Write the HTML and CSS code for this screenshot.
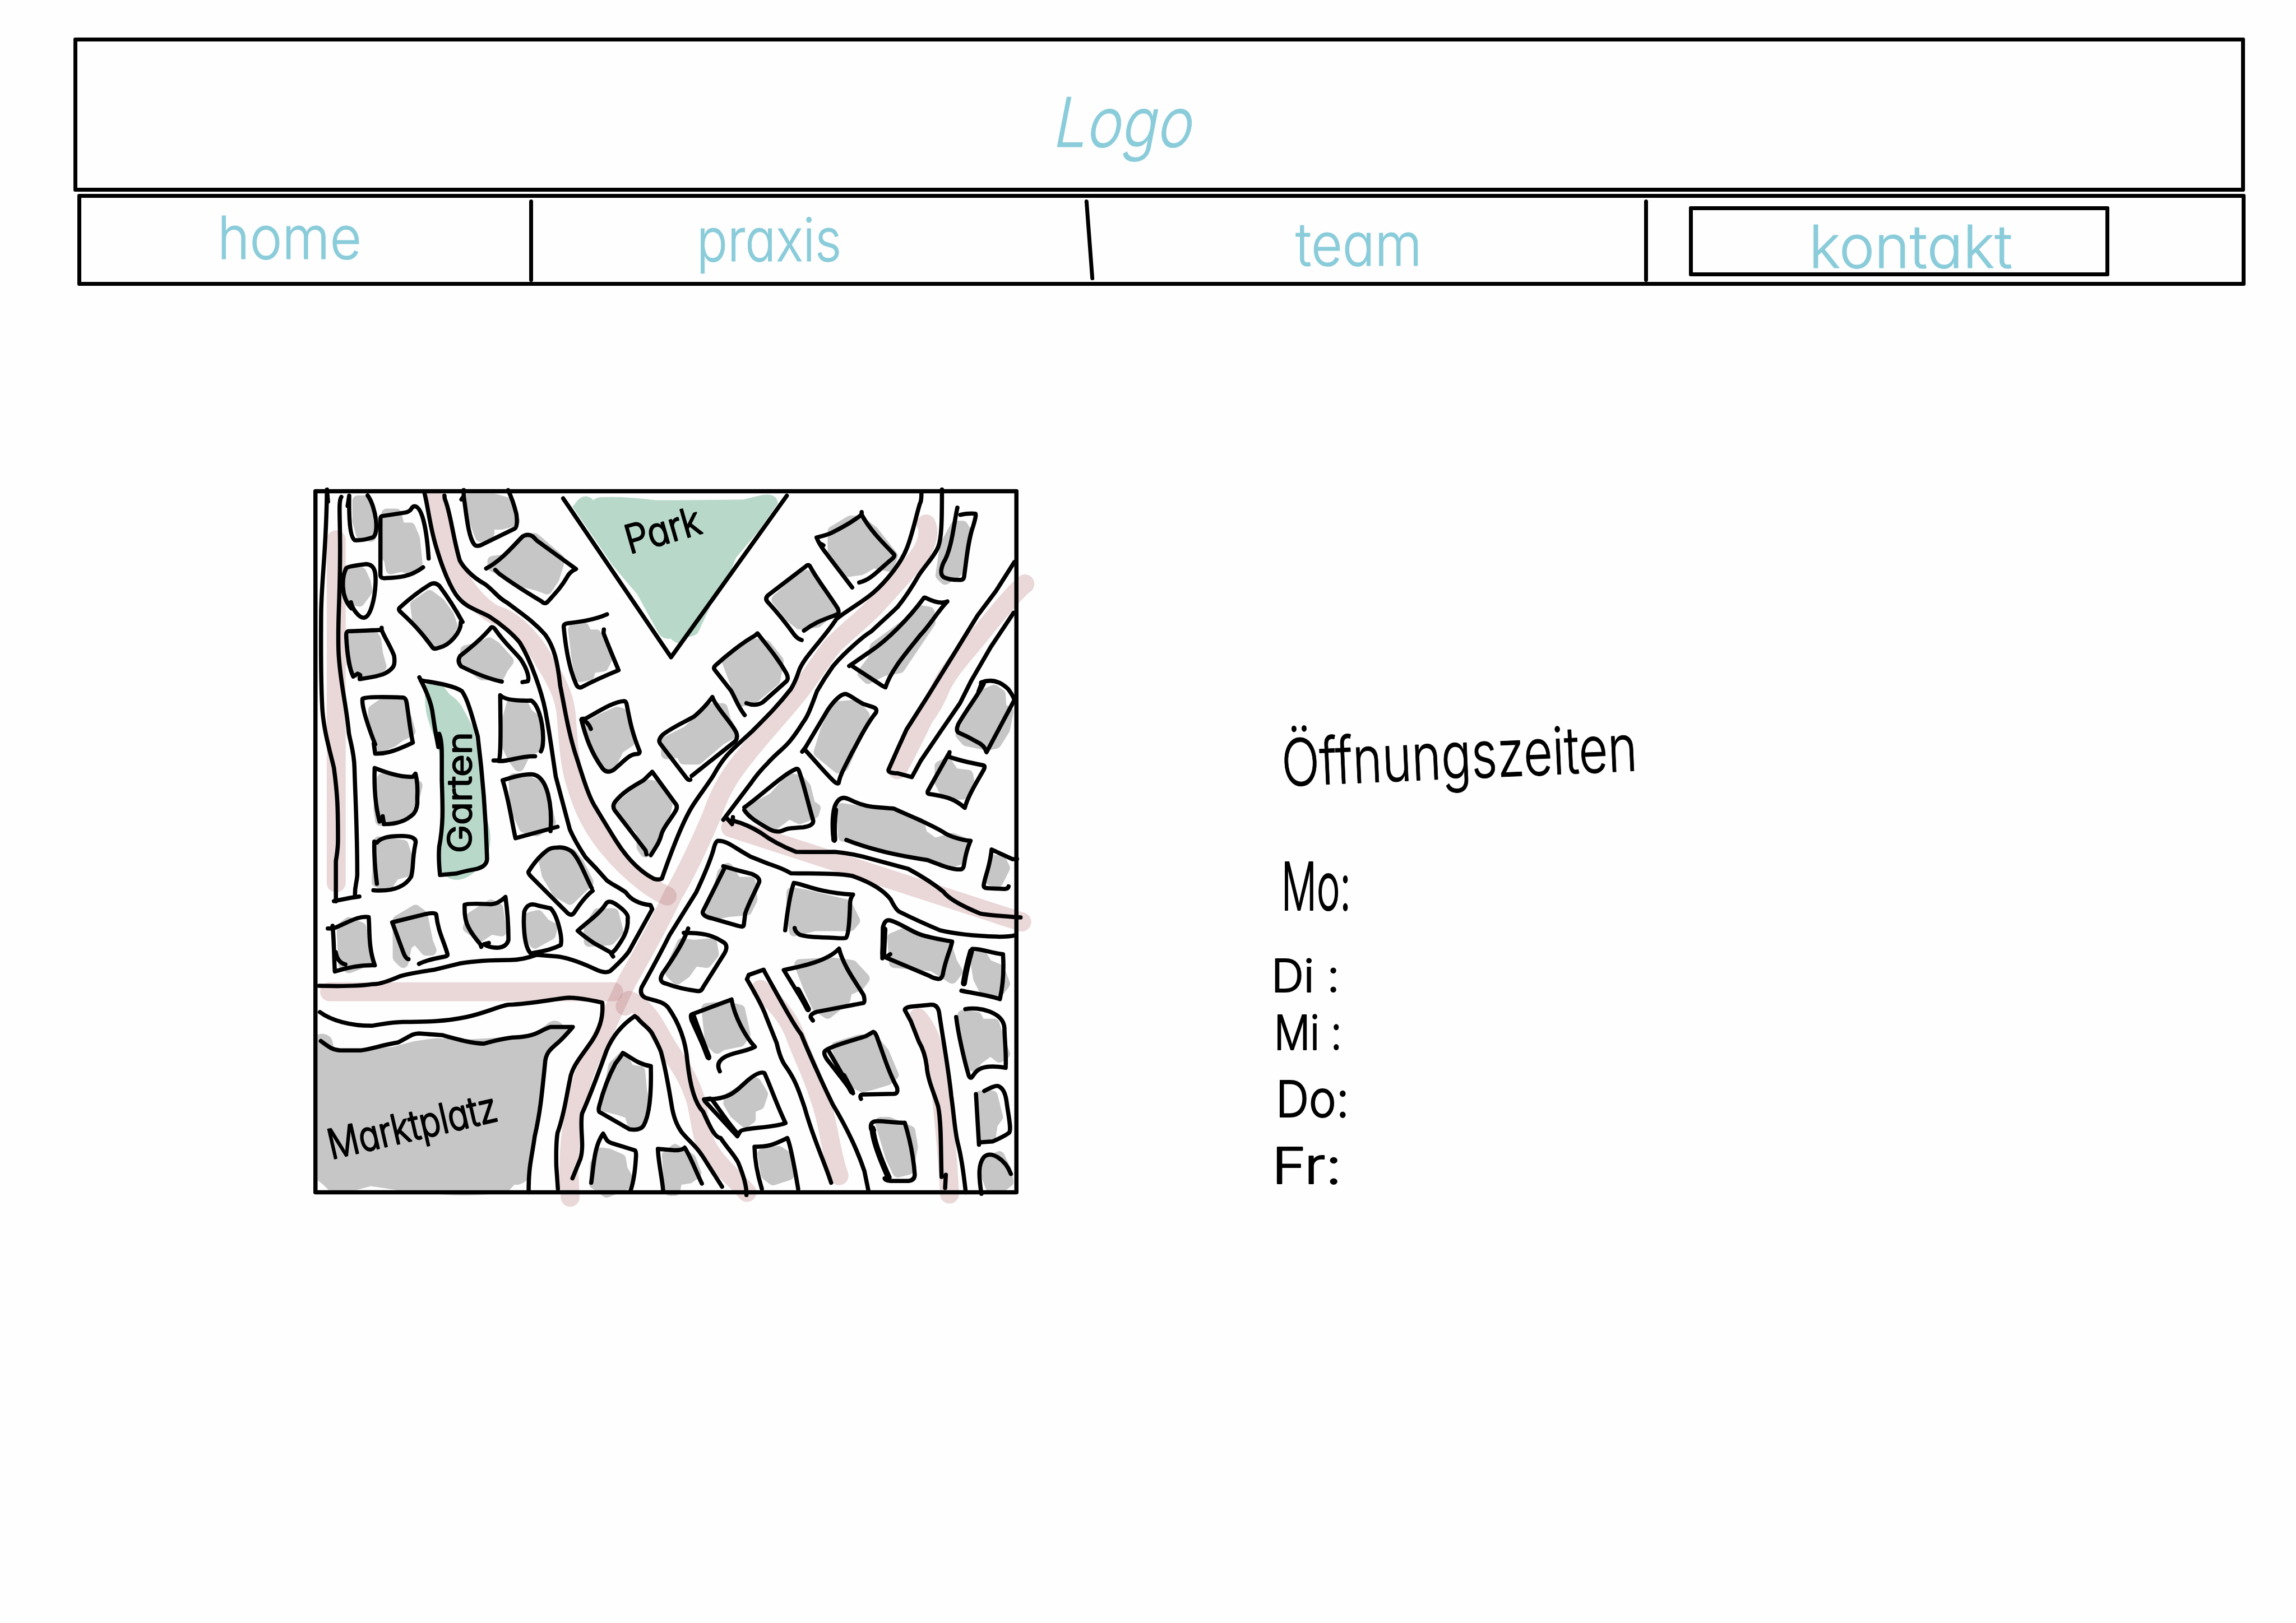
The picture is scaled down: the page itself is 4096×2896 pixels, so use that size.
FILE: index.html
```html
<!DOCTYPE html>
<html lang="de">
<head>
<meta charset="utf-8">
<title>Praxis – Kontakt</title>
<link rel="stylesheet" href="styles.css">
</head>
<body>
<header class="banner">
  <svg class="label logo" width="260" height="261"><text class="pen" textLength="248" lengthAdjust="spacingAndGlyphs" transform="translate(2 188) skewX(-11)">Logo</text></svg>
</header>
<nav class="menu">
  <a class="cell home"><svg class="label" width="259" height="150"><text class="pen" x="0" y="109" textLength="257" lengthAdjust="spacingAndGlyphs">home</text></svg></a>
  <i class="divider"></i>
  <a class="cell praxis"><svg class="label" width="258" height="150"><text class="pen" x="0" y="113" textLength="258" lengthAdjust="spacingAndGlyphs">praxis</text></svg></a>
  <i class="divider slanted"></i>
  <a class="cell team"><svg class="label" width="226" height="150"><text class="pen" x="0" y="121" textLength="226" lengthAdjust="spacingAndGlyphs">team</text></svg></a>
  <i class="divider"></i>
  <a class="active"><svg class="label" width="363" height="111"><text class="pen" x="0" y="103" textLength="363" lengthAdjust="spacingAndGlyphs">kontakt</text></svg></a>
</nav>
<main class="content">
<svg class="map" viewBox="48 60 4020 4021">
  <clipPath id="inside"><rect x="71" y="83" width="3974" height="3976"/></clipPath>
  <!-- blocks -->
  <g class="grey">
    <path d="M300 125 L350 125 L360 240 L375 330 L320 315 L300 240Z"/>
    <path d="M465 200 L520 200 L540 280 L600 280 L625 340 L640 480 L600 515 L550 500 L490 515 L480 460 L465 440Z"/>
    <path d="M255 535 L320 535 L345 590 L355 640 L310 700 L270 690 L255 640Z"/>
    <path d="M270 910 L380 880 L405 920 L415 1000 L435 1070 L400 1110 L310 1110 L265 1050Z"/>
    <path d="M630 720 L710 665 L770 710 L820 780 L840 840 L810 900 L750 930 L720 910 L640 800Z"/>
    <path d="M915 980 L1000 960 L1050 935 L1090 960 L1160 1040 L1130 1080 L1110 1120 L1010 1120 L920 1050Z"/>
    <path d="M935 115 L1080 115 L1150 135 L1170 190 L1195 240 L1120 260 L1050 260 L1050 310 L1000 330 L970 250Z"/>
    <path d="M1070 470 L1150 460 L1260 340 L1310 340 L1450 460 L1445 490 L1420 570 L1380 630 L1330 610 L1250 590 L1070 500Z"/>
    <path d="M390 1320 L440 1285 L540 1285 L580 1370 L600 1440 L540 1470 L500 1500 L430 1530 L390 1400Z"/>
    <path d="M1180 1280 L1240 1280 L1270 1340 L1310 1370 L1340 1520 L1260 1560 L1220 1640 L1190 1600 L1155 1530 L1155 1370Z"/>
  </g>
  <g class="grey" transform="translate(1320 0)">
    <path d="M210 860 L270 850 L290 890 L340 890 L360 940 L400 1030 L380 1070 L310 1080 L300 1120 L250 1130 L230 1030Z"/>
    <path d="M1090 1050 L1240 940 L1310 950 L1380 1040 L1360 1150 L1240 1250 L1170 1270 L1150 1210 L1120 1130Z"/>
    <path d="M300 1410 L370 1370 L460 1330 L490 1340 L520 1420 L530 1500 L470 1540 L430 1620 L390 1640 L340 1560 L290 1430Z"/>
    <path d="M740 1500 L860 1440 L1000 1310 L1060 1310 L1080 1380 L1120 1450 L1050 1490 L920 1600 L840 1600 L820 1560 L740 1570Z"/>
  </g>
  <g class="grey" transform="translate(2640 0)">
    <path d="M370 300 L470 240 L520 240 L600 300 L710 440 L690 500 L600 480 L550 510 L530 520 L460 530 L370 420Z"/>
    <path d="M50 690 L150 600 L220 550 L280 620 L370 740 L280 820 L180 830 L130 790Z"/>
    <path d="M1070 270 L1110 270 L1130 300 L1080 530 L1010 575 L985 550 L1010 380Z"/>
    <path d="M860 750 L920 760 L925 820 L750 1080 L660 1095 L570 1140 L540 1110 L600 1030 L610 960 L800 820Z"/>
    <path d="M1230 1230 L1290 1205 L1325 1230 L1330 1310 L1370 1330 L1350 1430 L1300 1510 L1250 1520 L1130 1495 L1100 1460 L1200 1290Z"/>
    <path d="M390 1300 L500 1290 L550 1350 L500 1480 L430 1640 L400 1650 L290 1560 L330 1430Z"/>
  </g>
  <g class="grey" transform="translate(0 1320)">
    <path d="M440 390 L600 400 L640 430 L610 560 L520 600 L430 630 L420 560Z"/>
    <path d="M420 750 L560 770 L580 830 L580 920 L510 940 L470 1000 L410 980Z"/>
    <path d="M1190 390 L1240 390 L1350 440 L1400 640 L1320 690 L1250 670 L1200 560Z"/>
    <path d="M950 1180 L1060 1110 L1100 1130 L1120 1260 L1060 1250 L1000 1290 L930 1240Z"/>
    <path d="M1285 1180 L1330 1170 L1370 1220 L1410 1240 L1400 1280 L1310 1330 L1280 1280Z"/>
    <path d="M530 1200 L630 1140 L670 1170 L700 1320 L720 1370 L690 1370 L630 1300 L580 1340 L560 1440 L530 1410 L530 1330Z"/>
    <path d="M210 1240 L250 1210 L320 1240 L340 1340 L370 1440 L330 1440 L250 1470 L220 1450Z"/>
  </g>
  <g class="grey" transform="translate(1320 1320)">
    <path d="M480 550 L620 425 L670 430 L745 540 L730 610 L700 660 L670 740 L620 810 L600 780 L600 690 L550 640Z"/>
    <path d="M40 850 L100 810 L200 820 L240 870 L295 980 L190 1080 L120 1040 L60 940Z"/>
    <path d="M300 1240 L350 1160 L440 1160 L465 1260 L420 1310 L300 1320Z"/>
    <path d="M1060 930 L1090 900 L1140 980 L1220 980 L1230 1080 L1200 1140 L1090 1150 L990 1170 L1030 1050Z"/>
    <path d="M830 1330 L900 1340 L1000 1330 L1010 1390 L970 1440 L900 1430 L850 1500 L800 1535 L765 1500 L780 1440Z"/>
    <path d="M1220 570 L1350 500 L1450 390 L1500 400 L1535 440 L1560 540 L1590 560 L1580 590 L1500 620 L1440 590 L1360 650 L1330 640Z"/>
  </g>
  <g class="grey" transform="translate(2640 1320)">
    <path d="M980 320 L1020 300 L1060 360 L1140 370 L1150 420 L1110 480 L1060 480 L1000 450 L980 410Z"/>
    <path d="M420 560 L700 600 L860 640 L880 710 L950 760 L1050 730 L1130 760 L1100 850 L1040 870 L900 820 L700 780 L430 720Z"/>
    <path d="M1285 855 L1330 860 L1350 900 L1310 980 L1270 970Z"/>
    <path d="M135 1040 L200 1050 L450 1110 L495 1200 L470 1230 L270 1230 L150 1260 L135 1150Z"/>
    <path d="M710 1300 L780 1270 L900 1320 L1020 1350 L1050 1440 L1080 1490 L1050 1530 L940 1460 L720 1440Z"/>
    <path d="M180 1450 L360 1440 L480 1455 L550 1530 L520 1570 L450 1600 L440 1650 L340 1730 L280 1690 L230 1580Z"/>
    <path d="M1180 1410 L1220 1400 L1250 1450 L1320 1480 L1350 1560 L1320 1600 L1230 1590 L1200 1530Z"/>
  </g>
  <g transform="translate(0 2670)">
    <path class="square" d="M72 500 Q110 485 145 515 Q162 535 162 580 L320 585 L500 570 L620 538 L750 520 L900 530 L1100 518 L1300 500 L1380 440 Q1430 400 1470 445 L1530 457 L1380 620 L1345 850 L1310 1080 L1265 1332 Q1220 1365 1195 1355 L1165 1388 H530 L375 1365 L290 1388 H135 L110 1362 L72 1330Z M710 1405 Q900 1430 1110 1405Z"/>
  </g>
  <g class="grey" transform="translate(1320 2670)">
    <path d="M440 680 L490 630 L530 700 L590 710 L600 820 L610 870 L580 1010 L545 1000 L530 950 L470 930 L390 910Z"/>
    <path d="M370 1175 L410 1180 L480 1210 L490 1270 L515 1310 L500 1360 L400 1400 L330 1350 L335 1240Z"/>
    <path d="M745 1190 L790 1155 L880 1210 L910 1290 L870 1320 L800 1330 L790 1390 L760 1390Z"/>
    <path d="M970 350 L1080 340 L1160 360 L1190 500 L1160 540 L1060 560 L1030 580 L990 540Z"/>
    <path d="M1100 860 L1250 775 L1290 840 L1270 900 L1220 920 L1220 980 L1190 1000 L1130 950 L1095 890Z"/>
    <path d="M1290 1180 L1380 1165 L1420 1190 L1440 1300 L1350 1330 L1310 1300Z"/>
  </g>
  <g class="grey" transform="translate(2640 2670)">
    <path d="M390 570 L520 530 L600 530 L660 600 L715 730 L680 760 L580 790 L540 800 L480 770 L420 650Z"/>
    <path d="M640 1000 L690 1000 L810 1050 L825 1140 L800 1270 L740 1285 L700 1200Z"/>
    <path d="M1110 390 L1190 400 L1210 440 L1290 440 L1330 560 L1350 610 L1320 630 L1270 590 L1200 640 L1165 680 L1130 560Z"/>
    <path d="M1210 850 L1280 850 L1310 970 L1280 1010 L1270 1080 L1220 1090Z"/>
    <path d="M1260 1220 L1320 1195 L1360 1280 L1370 1340 L1330 1370 L1270 1370 L1245 1300Z"/>
  </g>
  <!-- gardens -->
  <path class="green" transform="translate(1320 0)" d="M205 160 L235 122 Q280 78 325 122 Q340 105 380 105 Q500 100 680 122 Q900 124 1180 118 L1290 92 Q1370 80 1377 140 L1265 300 L1138 450 L1110 520 L1000 710 L920 880 Q900 900 865 902 L820 938 Q790 940 765 912 Q720 920 695 880 L575 660 L545 625 L435 495Z"/>
  <path class="green" d="M688 1172 Q740 1160 790 1185 L825 1230 Q870 1260 895 1300 L960 1420 L1010 1700 L1040 1950 Q1070 2040 1048 2120 L1025 2175 L960 2250 Q880 2310 815 2275 L775 2235 L775 2100 L790 1900 L765 1560 L700 1370 Q675 1280 688 1172Z"/>
  <!-- roads -->
  <g class="road">
    <path d="M178 348 V2305"/>
    <path clip-path="url(#inside)" d="M745 60 L765 180 C790 330 820 430 870 540 C920 640 1000 730 1080 775 C1180 800 1290 900 1370 1050 C1450 1180 1480 1250 1490 1350 C1500 1500 1510 1650 1550 1760 C1600 1930 1680 2060 1820 2200 Q1960 2335 2065 2380"/>
    <path d="M3542 258 Q3570 320 3520 410 C3480 480 3330 640 3280 695 C3200 790 3110 850 3010 950 C2950 1020 2860 1170 2790 1250 C2700 1360 2580 1490 2520 1570 C2430 1680 2370 1770 2320 1920 C2260 2060 2180 2240 2100 2370 C2020 2540 1920 2720 1840 2860 C1780 2980 1740 3080 1680 3210 C1600 3350 1575 3430 1535 3620 C1510 3760 1505 3850 1505 3970 L1512 4098"/>
    <path d="M140 2926 H1760"/>
    <path d="M1825 3008 L1848 2975 C1960 3020 2010 3150 2060 3230 C2120 3330 2180 3390 2230 3550 C2260 3680 2260 3760 2300 3820 C2350 3910 2450 3990 2520 4070"/>
    <path d="M2427 1990 L4087 2528"/>
    <path d="M4105 600 Q4050 640 3840 900 C3760 1000 3680 1080 3630 1180 Q3580 1300 3530 1360 Q3450 1530 3378 1660"/>
    <path d="M2597 2912 C2680 2990 2760 3070 2800 3190 C2840 3300 2890 3390 2930 3520 C2990 3680 2990 3820 3045 3975"/>
    <path d="M3495 3075 C3580 3170 3610 3330 3625 3480 C3640 3640 3665 3850 3675 4080"/>
  </g>
  <!-- ink -->
  <rect class="ink" x="59.500" y="71.500" width="3997" height="3998"/>
  <g class="ink">
    <path d="M131 130 L125 62 C122 400 95 560 92 760 C90 1000 90 1150 98 1300 C105 1440 150 1580 165 1650 C185 1800 188 1870 188 2060 Q188 2110 176 2180 V2410 M165 2409 L260 2390 L310 2383"/>
    <path d="M207 104 C190 130 200 200 200 400 C200 700 185 800 191 980 C197 1150 235 1280 250 1450 C260 1510 280 1560 282 1650 C288 1850 298 2000 298 2260 C295 2310 283 2320 285 2380"/>
    <path d="M243 155 L252 97 C250 220 255 330 283 350 Q320 355 385 335 C425 320 405 160 357 95"/>
    <path d="M705 455 C695 300 670 160 625 157 C600 160 615 185 570 193 L440 213 Q430 215 430 230 V550 Q432 570 460 567 C540 563 600 560 673 505"/>
    <path d="M262 705 L265 740 C200 670 210 560 235 510 Q240 500 350 487 C400 490 405 540 402 600 C398 680 375 790 335 793 C310 795 270 745 262 705"/>
    <path d="M437 850 V862 L245 870 Q233 875 235 900 C240 1000 255 1090 275 1128 L300 1112 L315 1120 L312 1143 C400 1130 440 1120 460 1108 C510 1080 515 1060 508 1010 C490 960 450 900 437 862"/>
    <path d="M898 817 C850 730 810 670 765 610 Q740 588 715 602 C650 640 590 690 540 735 Q530 745 545 760 C610 820 660 870 725 960 Q735 975 760 965 C830 950 890 870 888 820"/>
    <path d="M1122 1157 C1040 1140 950 1100 890 1070 Q865 1040 885 1010 C950 960 1010 910 1060 850 Q1070 840 1085 860 C1140 940 1190 980 1230 1030 C1270 1090 1280 1140 1270 1155 L1240 1160"/>
    <path d="M682 84 C705 180 710 260 745 380 C780 500 820 600 860 660 C910 730 960 740 1050 785 C1120 830 1190 890 1225 935 C1290 1040 1350 1220 1370 1320 C1400 1480 1410 1570 1430 1700 Q1480 1890 1510 2000 Q1540 2070 1600 2160 Q1660 2220 1720 2290 C1760 2320 1790 2330 1830 2360 Q1870 2420 1970 2432 L1980 2455 L1850 2690 Q1830 2725 1740 2808 Q1710 2825 1650 2795 Q1520 2735 1440 2725 L1320 2715 Q1240 2745 1170 2745 Q1000 2745 880 2765 L740 2800 Q600 2820 540 2838 Q430 2885 390 2882 Q300 2897 80 2892"/>
    <path d="M795 97 L797 115 C830 190 840 320 882 465 C900 500 950 560 1025 600 C1080 640 1100 680 1150 705 C1250 780 1310 820 1370 890 C1420 960 1440 1040 1455 1180 C1480 1300 1500 1450 1555 1610 C1590 1720 1620 1820 1660 1880 Q1720 1980 1770 2060 Q1870 2220 1990 2282 Q2020 2290 2035 2280 C2070 2180 2130 2010 2190 1900 C2220 1840 2280 1770 2330 1690 C2390 1580 2430 1550 2550 1440 C2640 1350 2700 1290 2770 1200 Q2795 1160 2815 1100 C2840 1020 2960 910 3030 800 C3090 750 3170 710 3240 650 C3310 590 3400 480 3430 400 C3460 330 3480 230 3505 145 Q3515 130 3515 84"/>
    <path d="M3632 62 C3632 250 3630 340 3610 390 C3590 440 3540 490 3500 550 C3460 620 3420 680 3380 730 C3330 780 3270 830 3230 870 Q3190 895 3140 940 Q3060 1010 3010 1070 Q2960 1140 2920 1210 C2890 1290 2870 1350 2840 1390 C2740 1550 2720 1530 2640 1620 Q2580 1680 2540 1740 L2385 1945 L2400 1930 L2435 1970 L2440 1930 V1950 Q2520 1970 2600 2020 Q2680 2080 2800 2128 Q2900 2130 3020 2128 Q3100 2135 3180 2155 L3440 2225 Q3560 2290 3640 2355 Q3680 2410 3850 2480 Q3900 2490 4080 2502"/>
    <path d="M905 65 V100 L892 118 L905 100 C920 200 930 330 965 375 Q975 388 1000 380 L1195 285 Q1215 275 1205 200 Q1185 120 1158 65"/>
    <path d="M1033 512 C1120 465 1180 390 1240 330 Q1270 310 1300 330 L1325 355 L1545 515 Q1510 530 1495 560 C1460 620 1430 650 1385 700 Q1368 720 1350 700 Q1200 610 1105 540 L1085 520"/>
  </g>
  <g class="ink" transform="translate(1320 0)">
    <path d="M152 112 L767 1018 L1427 97"/>
    <path d="M402 773 C330 805 250 815 175 825 Q155 828 155 845 C165 950 185 1080 225 1170 Q235 1195 255 1190 C330 1150 400 1120 468 1092 C430 1000 400 930 382 880 L384 860"/>
    <path d="M310 1427 C300 1400 280 1380 258 1370 L280 1368 C350 1330 440 1270 500 1268 Q512 1270 515 1290 C535 1400 550 1460 588 1555 Q590 1570 570 1570 C530 1570 500 1610 440 1660 Q400 1685 375 1650 C310 1560 280 1470 256 1375"/>
    <path d="M1197 1280 Q1250 1300 1290 1275 L1425 1155 Q1440 1140 1425 1110 C1380 1030 1330 970 1260 882 L1245 895 C1180 930 1080 1010 1020 1065 Q1005 1080 1020 1095 L1110 1210 C1140 1265 1150 1300 1187 1348"/>
    <path d="M1003 1245 C970 1290 930 1330 900 1355 C840 1390 770 1420 720 1460 Q690 1490 705 1510 L850 1700 Q865 1722 877 1717 M885 1695 L1130 1500 Q1150 1480 1140 1450 C1120 1400 1020 1300 1003 1245"/>
  </g>
  <g class="ink" transform="translate(2640 0)">
    <path d="M303 372 L316 380 L300 375 M480 620 L320 410 Q290 370 277 335 C320 325 340 320 360 310 C420 280 490 240 533 205 L534 190 V205 C580 290 650 360 718 430 Q725 440 710 455 C630 520 590 575 520 592"/>
    <path d="M205 866 C280 810 330 800 390 775 Q410 770 398 740 C340 650 270 560 240 500 Q230 485 215 500 L0 665 Q-20 685 0 705 C60 770 100 820 150 890 Q170 915 192 920"/>
    <path d="M1080 165 C1060 250 1050 400 1000 480 Q975 540 1000 560 Q1030 578 1100 577 Q1115 575 1118 560 C1130 480 1140 350 1170 270 Q1190 203 1183 200 Q1150 195 1097 206"/>
    <path d="M463 1068 L590 980 C680 920 800 800 885 685 Q890 675 900 680 C950 705 990 715 1023 700 C980 740 920 840 870 890 C800 980 700 1090 670 1190 L650 1180 L475 1065"/>
    <path d="M1405 475 L1300 640 L1195 780 L1060 1000 L905 1250 L790 1430 L740 1540 L687 1660 Q685 1680 740 1680 L820 1702 L870 1610 L985 1440 L1095 1280 L1160 1150 L1270 960 L1400 765"/>
    <path d="M1200 1215 L1215 1175 V1162 Q1300 1130 1370 1200 Q1400 1240 1405 1262 L1246 1560 Q1235 1520 1190 1500 Q1140 1470 1085 1447 Q1070 1435 1085 1400 C1130 1320 1200 1230 1230 1170"/>
    <path d="M195 1557 L215 1530 L340 1320 C380 1260 420 1225 445 1228 C470 1235 520 1275 545 1285 L600 1303 Q625 1310 615 1335 C560 1400 520 1490 480 1560 C440 1640 410 1690 403 1735 Q395 1745 370 1720 C310 1660 270 1610 210 1545"/>
  </g>
  <g class="ink" transform="translate(0 1320)">
    <path d="M400 195 C370 120 320 -20 328 -65 Q350 -80 560 -72 Q575 -70 580 -40 C595 60 600 120 615 185 C500 240 450 250 400 248 L392 190"/>
    <path d="M443 605 L450 650 Q560 650 620 590 Q645 560 640 500 Q645 420 630 362 L615 380 C540 385 450 350 397 330 C393 450 405 560 425 635 L440 625"/>
    <path d="M410 990 Q393 860 395 750 L410 755 Q440 715 560 718 Q640 720 630 760 C610 850 620 900 605 950 Q550 1040 390 1027"/>
    <path d="M660 -170 C750 -155 850 -140 895 -108 C930 -60 960 60 985 150 C1010 350 1030 550 1038 850 Q1035 890 980 905 Q920 915 860 932 L770 940 Q760 850 765 780 C790 650 785 550 780 400 V250 Q780 170 765 135 L760 210 L740 100 L725 0 C710 -80 670 -150 652 -187"/>
    <path d="M1075 287 H1105 Q1115 280 1115 100 L1113 -85 Q1150 -50 1290 -55 C1350 -20 1375 180 1345 235 M1105 290 C1160 295 1220 260 1312 263"/>
    <path d="M1127 400 Q1230 365 1290 365 C1390 370 1410 560 1400 690 M1440 665 L1200 730 C1180 640 1160 500 1127 400"/>
    <path d="M1005 1350 L1000 1335 C910 1230 910 1190 910 1110 Q930 1100 1060 1107 Q1100 1105 1143 1065 C1155 1150 1160 1220 1160 1310 Q1150 1350 1100 1355 Q1050 1355 1020 1335 L1048 1328"/>
    <path d="M1285 1385 C1245 1340 1245 1200 1250 1150 Q1270 1090 1330 1115 L1400 1130 C1440 1170 1470 1300 1458 1340 Q1400 1370 1300 1385"/>
    <path d="M590 1420 Q575 1420 560 1380 L497 1210 L680 1165 Q740 1150 748 1165 C760 1270 790 1310 812 1390 Q815 1400 800 1405 Q690 1425 650 1447"/>
    <path d="M130 1245 H160 C240 1215 300 1170 363 1180 C370 1260 360 1350 398 1455 Q300 1450 170 1490 C165 1400 165 1300 157 1230 M175 1380 Q185 1440 230 1450"/>
  </g>
  <g class="ink" transform="translate(1320 1320)">
    <path d="M627 822 L622 800 L445 570 Q430 545 450 520 C500 460 560 430 610 400 L660 352 L790 530 Q810 550 790 580 C760 630 730 660 715 700 C700 760 680 780 652 827"/>
    <path d="M315 1015 C280 950 250 860 205 810 Q170 780 120 783 Q80 783 60 800 C20 830 -20 880 -45 920 Q-50 930 -30 950 L180 1160 Q200 1175 215 1155 C250 1100 280 1060 320 1030"/>
    <path d="M437 1405 L420 1380 L330 1330 Q270 1290 235 1258 C300 1200 360 1160 395 1105 Q410 1080 450 1105 Q530 1160 520 1190 C525 1260 490 1310 450 1365 L430 1385"/>
    <path d="M1065 890 Q1150 915 1230 935 Q1275 955 1270 980 C1240 1050 1210 1100 1190 1160 L1182 1225 Q1180 1240 1150 1230 L975 1180 Q940 1165 950 1145 L1070 905"/>
    <path d="M865 1245 C840 1320 790 1400 720 1500 Q690 1550 740 1560 Q820 1590 920 1602 Q940 1605 950 1580 L1070 1390 Q1100 1340 1060 1320 C1000 1280 940 1270 840 1270"/>
  </g>
  <g class="ink" transform="translate(2640 1320)">
    <path d="M-135 555 C-30 480 80 370 160 335 Q172 332 178 350 C210 440 230 540 258 630 Q260 660 200 668 C110 675 120 672 80 688 Q50 700 10 680 C-60 640 -110 610 -135 570"/>
    <path d="M1035 240 L1030 265 Q1100 290 1230 315 Q1240 320 1230 340 C1190 410 1140 490 1122 557 C1060 500 1000 490 920 478 Q905 475 912 460 L1030 250"/>
    <path d="M447 740 C600 800 750 830 910 855 C1000 890 1050 910 1100 908 Q1115 905 1118 880 Q1130 800 1155 745 C1090 740 1030 715 1010 702 C930 650 800 600 720 562 C650 555 600 555 560 545 C480 525 460 500 432 500 Q400 500 380 550 C365 600 365 700 378 745"/>
    <path class="bold" d="M383 570 Q372 650 378 738"/>
    <path d="M1420 848 L1395 850 L1275 795 C1265 900 1235 950 1230 1000 Q1230 1015 1250 1015 L1350 1020 Q1370 1018 1372 1005"/>
    <path d="M98 1255 C110 1150 125 1050 147 985 C200 990 280 1040 485 1052 Q470 1070 468 1100 C465 1200 460 1280 445 1298 Q440 1302 400 1300 C300 1295 220 1295 180 1280 Q155 1265 152 1243"/>
    <path d="M1405 1285 Q1380 1292 1320 1292 Q1100 1285 980 1255 Q850 1200 750 1150 Q730 1140 700 1080 Q640 1000 480 945 C400 930 300 933 130 930 Q90 905 0 875 L-100 835 C-200 780 -230 745 -285 745 Q-300 745 -312 800 Q-340 890 -410 1040 L-560 1280 C-630 1420 -670 1490 -720 1580 Q-735 1620 -700 1640 C-640 1660 -600 1660 -570 1695 C-510 1780 -470 1880 -460 2000 C-440 2190 -400 2260 -370 2290 C-330 2380 -300 2440 -270 2440 C-230 2500 -190 2540 -170 2580 Q-120 2700 -123 2765"/>
    <path d="M655 1240 Q665 1195 690 1198 C740 1205 810 1260 870 1280 C930 1300 1000 1310 1050 1320 C1040 1370 1020 1400 1000 1490 Q995 1535 970 1533 Q945 1530 920 1515 L670 1410 L697 1392 M652 1415 L655 1240"/>
    <path class="bold" d="M664 1250 L657 1390"/>
  </g>
  <g class="ink" transform="translate(0 2670)">
    <path d="M85 372 C150 420 260 450 380 450 C450 440 480 430 560 428 C700 428 800 425 920 400 C1020 380 1100 340 1160 330 C1300 325 1400 300 1500 290 Q1570 290 1695 318 Q1705 430 1640 530 C1580 620 1520 680 1510 760 C1490 850 1480 950 1440 1060 Q1430 1120 1433 1250 L1442 1380"/>
    <path d="M90 537 C140 575 160 588 200 590 H320 C380 582 440 560 530 545 C600 510 610 495 650 494 L780 503 C880 530 950 550 1020 552 C1080 535 1150 518 1200 516 C1320 510 1330 480 1400 457 L1527 457 Q1490 500 1460 530 C1420 570 1370 590 1368 670 C1350 850 1340 950 1310 1080 C1290 1220 1275 1250 1275 1400"/>
  </g>
  <g class="ink" transform="translate(1320 2670)">
    <path d="M205 1320 L250 1210 C275 1130 245 1030 260 950 C310 840 360 700 400 590 Q450 470 560 395 L575 405 C600 440 640 460 660 495 Q700 570 710 600 C740 710 755 810 770 900 Q785 1000 830 1060 C880 1120 910 1130 970 1230 L1058 1368"/>
    <path d="M492 605 C540 630 580 670 652 680 C655 800 650 950 610 1020 Q590 1050 530 1040 L365 945 Q350 940 357 910 C380 820 410 740 450 665 Q485 620 492 605"/>
    <path d="M312 1345 C325 1270 325 1140 380 1065 C400 1100 400 1110 430 1120 L560 1160 Q570 1165 567 1200 Q560 1320 537 1388"/>
    <path d="M722 1388 C715 1310 695 1230 692 1152 L790 1160 Q830 1160 845 1145 C880 1200 900 1260 943 1350"/>
    <path d="M1045 710 Q1020 660 1070 630 C1120 600 1190 600 1245 570 C1190 510 1130 400 1112 300 L885 385 Q875 390 885 420 L983 635"/>
    <path class="bold" d="M893 397 Q930 500 980 628"/>
    <path d="M990 865 L955 870 C1100 870 1130 830 1200 765 Q1270 705 1300 720 C1340 810 1370 900 1420 1005 C1340 1035 1170 1030 1160 1055 L1145 1080 L960 880 M1000 870 L1148 1075 L1080 1000"/>
    <path class="bold" d="M1075 985 L1135 1060"/>
    <path d="M1285 1380 Q1245 1250 1243 1140 C1320 1140 1350 1130 1430 1090 Q1450 1130 1492 1380"/>
  </g>
  <g class="ink" transform="translate(2640 2670)">
    <path d="M1165 12 C1220 10 1270 35 1340 42 C1345 120 1345 200 1322 298 C1260 275 1170 265 1103 250"/>
    <path class="bold" d="M1158 25 Q1130 120 1117 208"/>
    <path d="M230 360 L90 132 C200 110 340 80 405 10 C430 110 500 200 545 275 Q555 310 545 320 L280 370 Q235 385 245 405 L256 420"/>
    <path class="bold" d="M170 245 L228 355"/>
    <path d="M350 600 L485 835 C400 720 350 660 335 640 Q310 600 330 590 C370 560 500 530 560 508 L600 485 Q610 485 620 510 C660 620 690 720 735 800 Q745 835 720 838 L540 842 Q520 845 530 867"/>
    <path class="bold" d="M430 735 L478 825"/>
    <path d="M665 1320 Q670 1335 710 1335 H800 Q835 1333 837 1300 C830 1200 810 1100 780 1003 C720 1005 650 990 610 995 Q580 1000 588 1040 L605 1045"/>
    <path class="bold" d="M596 1035 Q600 1120 688 1315"/>
    <path d="M-120 185 L-110 160 L-25 130 L-15 150 C30 230 90 340 120 390 Q160 460 190 500 C230 600 320 800 370 900 Q490 1100 550 1280 L572 1388 M-120 185 C-70 270 -30 340 -10 400 L50 550 Q70 640 100 680 C150 750 170 800 210 920 C260 1100 320 1220 360 1345"/>
    <path d="M1010 1375 L1014 1300 M990 1312 C985 1200 990 1000 970 910 C950 840 910 760 905 680 Q895 600 860 540 L815 425 L780 360 Q780 345 820 340 L930 330 Q965 328 975 370 C1000 540 1030 700 1045 850 C1060 950 1065 1060 1085 1130 C1110 1230 1115 1300 1128 1400"/>
    <path d="M1125 355 C1200 340 1340 370 1348 460 C1350 540 1360 620 1355 690 Q1220 665 1180 720 L1165 740 Q1155 755 1145 735 C1120 650 1085 500 1073 400"/>
    <path d="M1233 822 Q1300 785 1315 795 Q1350 810 1360 880 C1370 960 1390 1040 1375 1060 Q1350 1080 1280 1110 L1202 1115 M1186 840 L1203 1128"/>
    <path d="M1217 1408 C1200 1300 1200 1240 1230 1200 Q1260 1170 1310 1200 Q1360 1230 1385 1295"/>
  </g>
  <!-- place names -->
  <text class="place" font-size="225" textLength="440" lengthAdjust="spacingAndGlyphs" transform="translate(1850 430) rotate(-16)">Park</text>
  <text class="place" font-size="190" textLength="690" lengthAdjust="spacingAndGlyphs" transform="translate(948 2135) rotate(-90)">Garten</text>
  <text class="place" font-size="235" textLength="985" lengthAdjust="spacingAndGlyphs" transform="translate(150 3882) rotate(-13)">Marktplatz</text>
</svg>
<section class="hours">
  <svg class="label title" width="635" height="160"><text class="pen" textLength="635" lengthAdjust="spacingAndGlyphs" transform="translate(0 153) rotate(-2.5)">Öffnungszeiten</text></svg>
  <svg class="label day first" width="124" height="87"><text class="pen" y="86" textLength="124" lengthAdjust="spacingAndGlyphs">Mo:</text></svg>
  <svg class="label day di" width="122" height="60"><text class="pen" y="59" textLength="122" lengthAdjust="spacingAndGlyphs" xml:space="preserve">Di :</text></svg>
  <svg class="label day mi" width="121" height="63"><text class="pen" y="62" textLength="121" lengthAdjust="spacingAndGlyphs" xml:space="preserve">Mi :</text></svg>
  <svg class="label day do" width="131" height="67"><text class="pen" y="66" textLength="131" lengthAdjust="spacingAndGlyphs">Do:</text></svg>
  <svg class="label day fr" width="125" height="68"><text class="pen" y="67" textLength="125" lengthAdjust="spacingAndGlyphs">Fr:</text></svg>
</section>
</main>
</body>
</html>
```
FILE: styles.css
```css
* { box-sizing: border-box; }
body {
  margin: 0;
  padding: 67px 0 0 131px;
  width: 4096px;
  height: 2896px;
  overflow: hidden;
  background: #fefefe;
  font-family: Inter, "Open Sans", sans-serif;
  font-feature-settings: "cv11" 1;
}
.label { display: block; overflow: visible; flex: none; }
.pen, .place {
  font-family: Inter, "Open Sans", sans-serif;
  font-weight: 300;
  stroke-linejoin: round;
}
.banner {
  display: flex;
  width: 3874px;
  height: 275px;
  border: 7px solid #000;
  border-radius: 3px;
  padding-left: 1736px;
}
.banner .pen, .menu .pen { fill: #8accda; stroke: #8accda; stroke-width: 1; }
.logo .pen { font-size: 122px; }
.menu {
  display: flex;
  width: 3868px;
  height: 164px;
  margin: 4px 0 0 7px;
  border: 7px solid #000;
  border-radius: 3px;
}
.menu .pen { font-size: 106px; }
.cell { display: block; flex: none; }
.home { width: 799px; padding-left: 243px; }
.praxis { width: 989px; padding-left: 292px; }
.team { width: 986px; padding-left: 364px; }
.divider { flex: none; width: 7px; margin-top: 3px; background: #000; border-radius: 4px; }
.slanted { margin-bottom: 3px; transform: skewX(4.300deg); }
.active {
  display: block;
  width: 750px;
  height: 125px;
  margin: 15px 0 0 73px;
  padding-left: 207px;
  border: 7px solid #000;
  border-radius: 3px;
}
.content { display: flex; margin: 363px 0 0 428px; }
.map { flex: none; display: block; width: 1258px; height: 1258px; overflow: visible; }
.grey { fill: #c6c6c6; stroke: #c6c6c6; stroke-width: 60; stroke-linejoin: round; }
.square { fill: #c6c6c6; }
.green { fill: #b8d9c9; }
.road { fill: none; stroke: #af6367; stroke-opacity: .25; stroke-width: 108; stroke-linecap: round; stroke-linejoin: round; }
.ink { fill: none; stroke: #000; stroke-width: 24; stroke-linecap: round; stroke-linejoin: round; }
.bold { stroke-width: 34; }
.place { fill: #000; stroke: #000; stroke-width: 8; }
.hours { display: flex; flex-direction: column; padding: 377px 0 0 451px; }
.hours .pen { fill: #000; stroke: #000; stroke-width: 2px; }
.title { margin-left: 20px; }
.hours .title .pen { font-size: 116px; stroke-width: 1px; }
.first { margin: 128px 0 0 18px; }
.first .pen { font-size: 118px; }
.di { margin-top: 86px; }
.di .pen { font-size: 81px; }
.mi { margin: 40px 0 0 5px; }
.mi .pen { font-size: 85px; }
.do { margin: 53px 0 0 8px; }
.do .pen, .fr .pen { font-size: 90px; }
.fr { margin: 51px 0 0 1px; }
```
